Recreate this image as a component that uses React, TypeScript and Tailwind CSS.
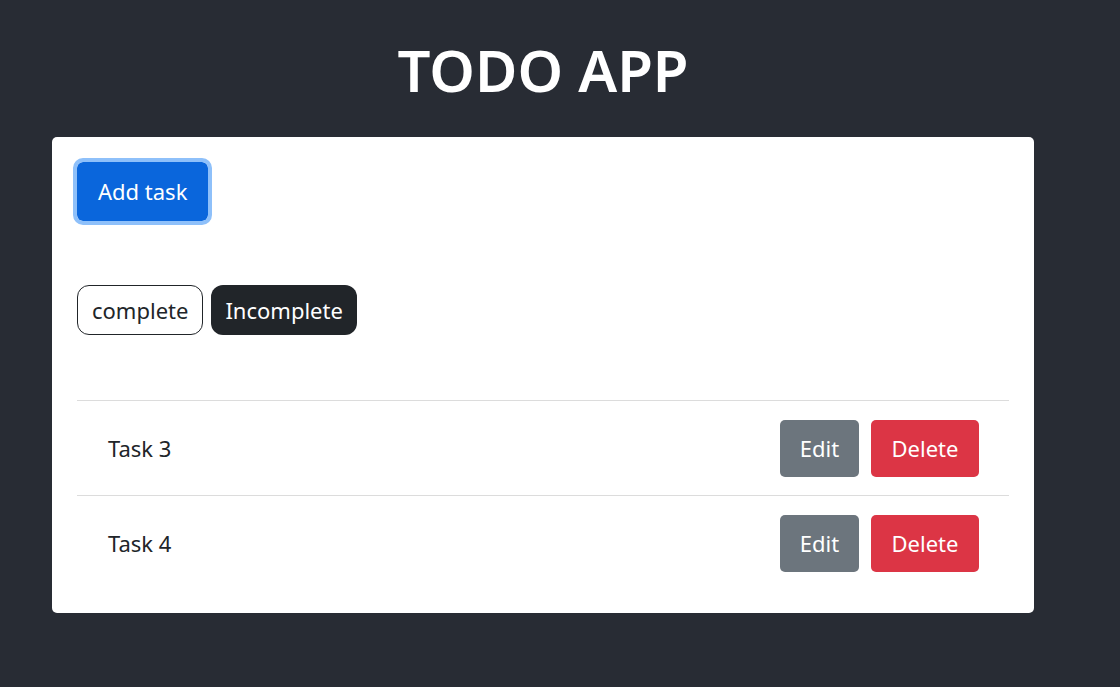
export default function App() {
  const tasks = ["Task 3", "Task 4"];
  return (
    <div className="min-h-[687px] w-full bg-[#282c34] font-['Noto_Sans',sans-serif] text-[#212529]">
      <div className="w-[982px] ml-[52px] pt-[30px]">
        <h1 className="text-center text-white font-semibold text-[58px] leading-[80px] mb-[27px]">TODO APP</h1>
        <div className="bg-white rounded-[5px] px-[25px] pt-[25px] pb-[23px]">
          <button className="bg-[#0a66dc] text-white text-[22px] leading-[33px] px-[21px] py-[13px] rounded-[6px] outline outline-[4px] outline-[#8ec0fa]">
            Add task
          </button>
          <div className="flex gap-[8px] mt-[64px]">
            <button className="border border-[#212529] rounded-[12px] px-[14px] h-[50px] text-[22px] bg-white text-[#212529]">complete</button>
            <button className="rounded-[12px] px-[14px] h-[50px] text-[22px] bg-[#212529] text-white">Incomplete</button>
          </div>
          <ul className="mt-[65px]">
            {tasks.map((t) => (
              <li key={t} className="flex items-center justify-between h-[95px] pl-[31px] pr-[30px] border-t border-[#dcdcdc]">
                <span className="text-[22px]">{t}</span>
                <div className="flex gap-[12px]">
                  <button className="bg-[#6c757d] text-white text-[22px] h-[57px] w-[79px] rounded-[5px]">Edit</button>
                  <button className="bg-[#dc3545] text-white text-[22px] h-[57px] w-[108px] rounded-[5px]">Delete</button>
                </div>
              </li>
            ))}
          </ul>
        </div>
      </div>
    </div>
  );
}
